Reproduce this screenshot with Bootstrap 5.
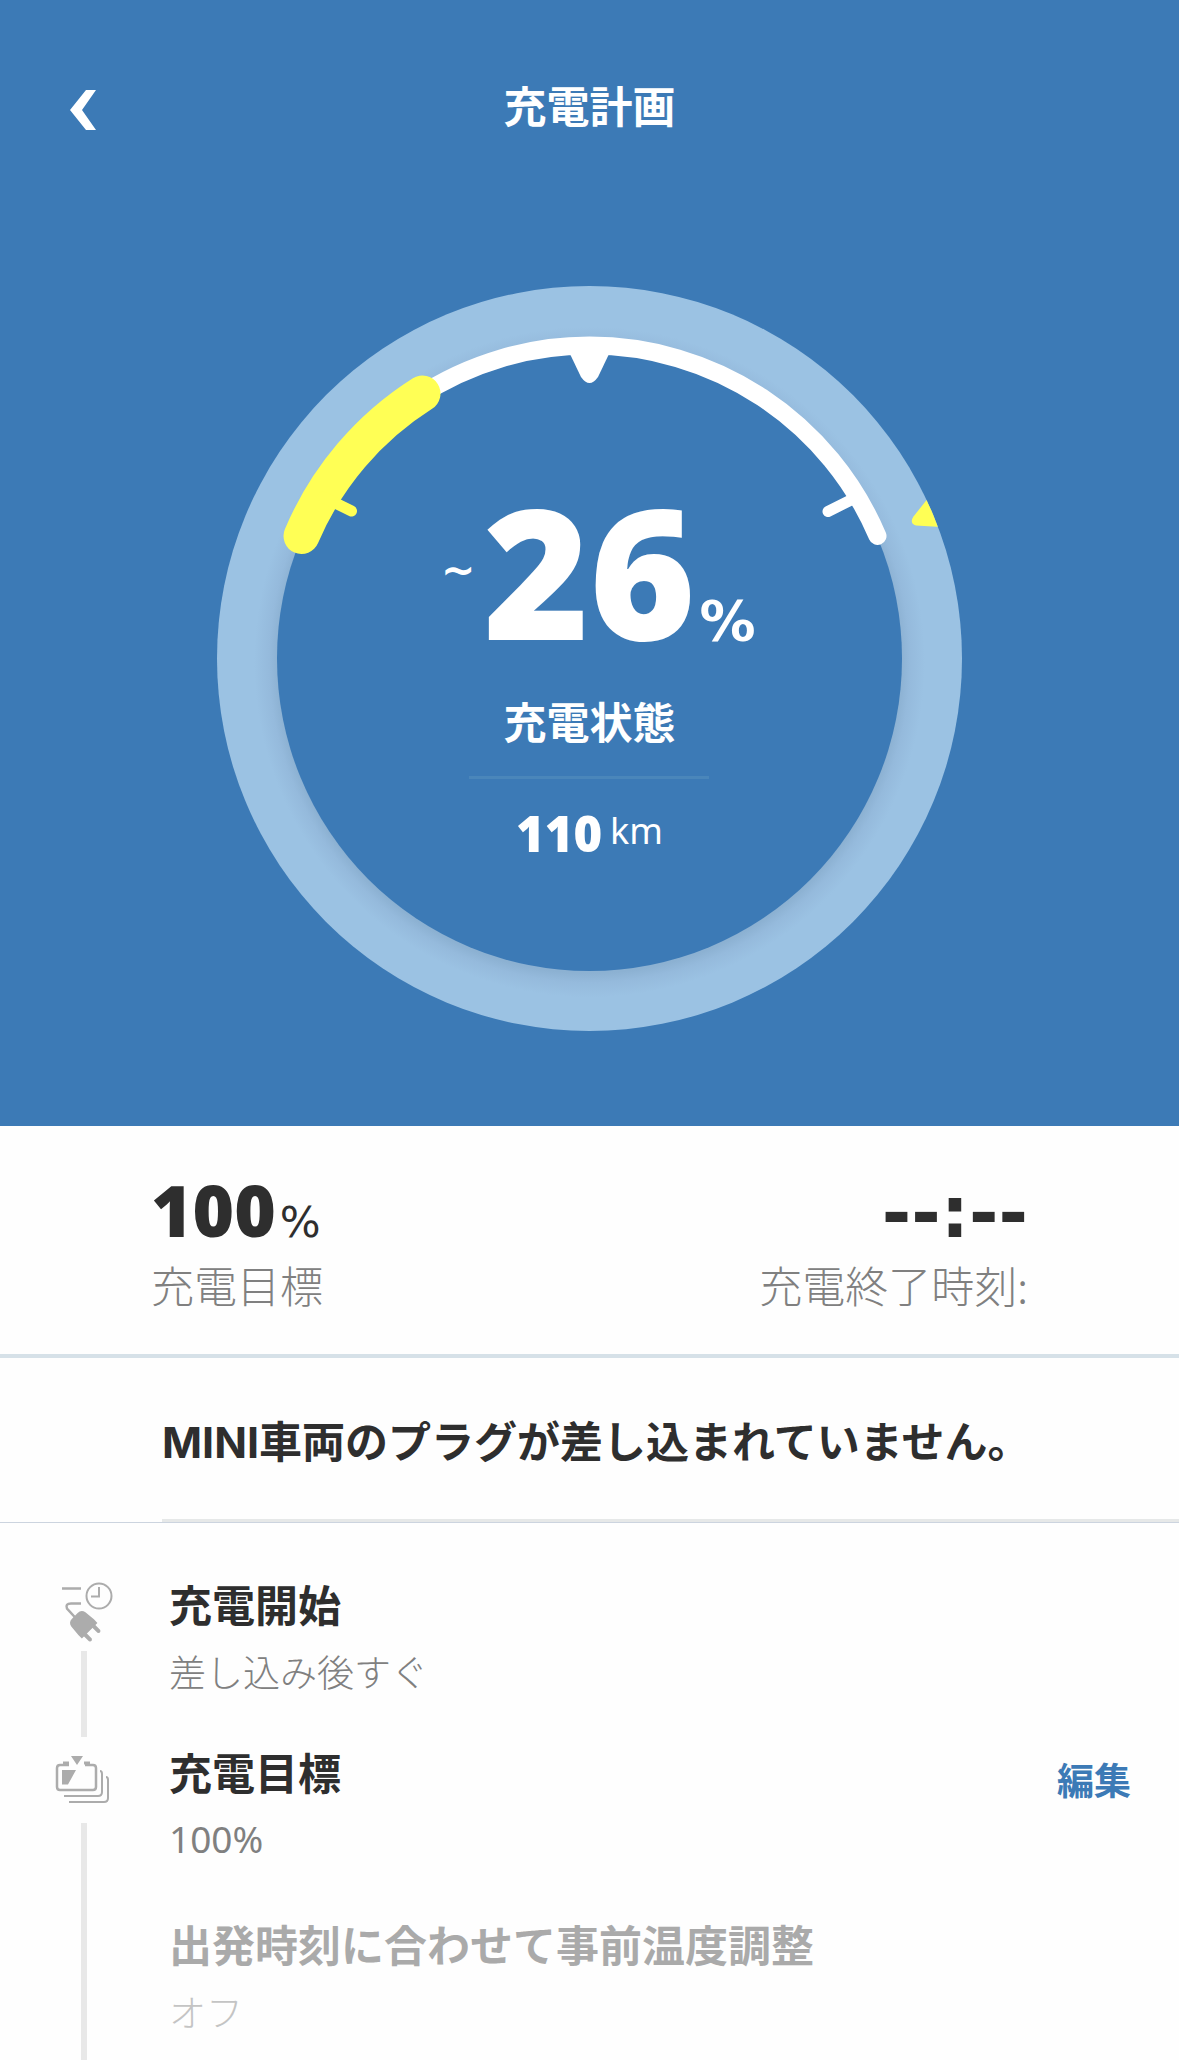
<!DOCTYPE html>
<html lang="ja">
<head>
<meta charset="utf-8">
<meta name="viewport" content="width=device-width, initial-scale=1">
<title>充電計画</title>
<link href="https://cdn.jsdelivr.net/npm/bootstrap@5.3.0/dist/css/bootstrap.min.css" rel="stylesheet">
<style>
  :root { --mini-blue: #3c7ab6; --ink: #2e2e2e; --muted: #808080; --idle: #aaaaaa; }
  body { font-family: "Noto Sans", "Noto Sans CJK JP", sans-serif; color: var(--ink); background: #fefefe; overflow-x: hidden; }
  .cjk { font-family: "Noto Sans CJK JP", "Noto Sans", sans-serif; }
  .numerals { font-family: "Open Sans", "Noto Sans", sans-serif; font-weight: 800; }
  .wide-sign { font-family: "DejaVu Sans", sans-serif; }
  .hero { background: var(--mini-blue); padding-bottom: 95px; }
  .topbar { display: grid; grid-template-columns: 1fr auto 1fr; padding: 72px 56px 0; }
  .back-btn { padding: 17px 13px 5px; border: 0; line-height: 1; justify-self: start; }
  .back-btn svg { display: block; }
  .heading { font-size: 43px; line-height: 64px; font-weight: 700; }
  .gauge { display: grid; justify-items: center; width: 745px; max-width: 100%; margin: 150px auto 0; }
  .gauge > * { grid-area: 1 / 1; }
  .gauge-svg { width: 100%; height: auto; }
  .readout { padding-top: 184px; }
  .level-row { display: grid; grid-template-columns: 1fr auto 1fr; align-items: baseline; margin-bottom: 18px; }
  .level { font-size: 181px; line-height: 200px; }
  .level-unit { font-size: 56px; line-height: 60px; font-weight: 700; }
  .approx { font-size: 41px; font-weight: 700; line-height: 200px; align-self: start; justify-self: end; }
  .rule { width: 240px; height: 3px; background: #4a86ba; margin: 24px 0 22px; }
  .range-num { font-size: 49px; line-height: 64px; }
  .range-unit { font-size: 36px; line-height: 60px; }
  .summary { padding: 42px 151px 36px; border-bottom: 4px solid #d6e1e8; }
  .summary-value { height: 80px; line-height: 84px; }
  .summary-num { font-size: 71px; }
  .summary-time { line-height: 90px; }
  .summary-unit { font-size: 43px; }
  .summary-label { font-size: 43px; line-height: 68px; margin-top: 2px; font-weight: 300; color: var(--muted); }
  .notice { padding: 52px 0 0 162px; border-bottom: 1px solid #ccd4df; }
  .notice .heading { font-family: Inter, "Noto Sans CJK JP", sans-serif; }
  .notice-line { height: 3px; background: #e6e8e8; margin-top: 45px; }
  .timeline { padding: 50px 48px 0 54px; }
  .step-item { display: flex; }
  .step-rail { width: 60px; margin-right: 55px; display: flex; flex-direction: column; align-items: center; flex: none; }
  .step-icon { height: 75px; margin-top: 3px; flex: none; }
  .rail-bar { width: 6px; background: #e8e8e8; flex-grow: 1; }
  .step-body { padding-bottom: 48px; }
  .step-title { font-size: 43px; line-height: 60px; font-weight: 700; }
  .step-note { font-size: 37px; line-height: 44px; margin-top: 16px; font-weight: 300; color: var(--muted); }
  .inactive .step-title { color: var(--idle); }
  .inactive .step-note { color: #c4c4c4; }
  .edit-link { font-size: 37px; line-height: 76px; font-weight: 700; color: var(--mini-blue); }
</style>
<script src="https://cdn.jsdelivr.net/npm/bootstrap@5.3.0/dist/js/bootstrap.bundle.min.js"></script>
</head>
<body>
<div class="d-flex flex-column min-vh-100">
  <header class="hero text-white">
    <div class="topbar">
      <button type="button" class="btn back-btn" aria-label="戻る">
        <svg width="28" height="40" viewBox="0 0 28 40" fill="#fff"><path d="M17 0h10L13 20l14 20H17L1 20z"/></svg>
      </button>
      <h1 class="heading cjk m-0">充電計画</h1>
    </div>
    <section class="gauge" aria-label="充電状態">
      <svg class="gauge-svg" viewBox="0 0 745 745" aria-hidden="true">
        <defs>
          <radialGradient id="ringShade" gradientUnits="userSpaceOnUse" cx="372.5" cy="376" r="372.5">
            <stop offset=".835" stop-color="#8cb1d2"/>
            <stop offset=".86" stop-color="#95badc"/>
            <stop offset=".9" stop-color="#9bc2e3"/>
          </radialGradient>
          <clipPath id="ringClip"><circle cx="372.5" cy="372.5" r="372.5"/></clipPath>
        </defs>
        <circle cx="372.5" cy="372.5" r="372.5" fill="url(#ringShade)"/>
        <circle cx="372.5" cy="372.5" r="312.5" fill="#3c7ab6"/>
        <g clip-path="url(#ringClip)"><path d="M696.500 230.500L712 211L740 190V242L699 239.500Q692 237 696.500 230.500z" fill="#ffff55"/></g>
        <g fill="none" stroke="#fff" stroke-linecap="round">
          <path d="M84.500 250A313 313 0 0 1 660.500 250" stroke-width="18"/>
          <path d="M640 211L611 225.500" stroke-width="11"/>
        </g>
        <path d="M353 68H392L381 91Q372.500 103 364 91z" fill="#fff"/>
        <g fill="none" stroke="#ffff55" stroke-linecap="round">
          <path d="M84.500 250A313 313 0 0 1 205.500 107.500" stroke-width="36"/>
          <path d="M106 211L134.500 225" stroke-width="11"/>
        </g>
      </svg>
      <div class="readout d-flex flex-column align-items-center">
        <div class="level-row">
          <span class="approx wide-sign me-2">~</span>
          <span class="level numerals">26</span>
          <span class="level-unit wide-sign ms-1">%</span>
        </div>
        <h2 class="heading cjk m-0">充電状態</h2>
        <div class="rule"></div>
        <div class="d-flex"><span class="range-num numerals">110</span><span class="range-unit ms-2">km</span></div>
      </div>
    </section>
  </header>
  <section class="summary d-flex justify-content-between">
    <div>
      <div class="summary-value"><span class="summary-num numerals">100</span><span class="summary-unit wide-sign ms-1">%</span></div>
      <div class="summary-label cjk">充電目標</div>
    </div>
    <div class="text-end">
      <div class="summary-value summary-time summary-num wide-sign fw-bold">--:--</div>
      <div class="summary-label cjk">充電終了時刻:</div>
    </div>
  </section>
  <section class="notice">
    <h2 class="heading m-0">MINI車両のプラグが差し込まれていません。</h2>
    <div class="notice-line"></div>
  </section>
  <main class="timeline d-flex flex-column flex-grow-1">
    <div class="step-item">
      <div class="step-rail">
        <svg class="step-icon" width="60" height="75" viewBox="0 0 60 75" fill="none" stroke="#acacac" stroke-width="2">
          <circle cx="45" cy="20" r="12.500"/><path d="M45 11v9.500h-8"/><path d="M8 12.500h19M27 27.500H17q-6 0-4 5l10 11" stroke-width="2.500"/>
          <g transform="translate(30 49) rotate(-45)" fill="#acacac" stroke="none">
            <path d="M-10-8Q-9-13-4-13H4Q9-13 10-8L11 3V8H-11V3z"/><path d="M-8 6h4v9q-2 3-4 0zM4 6h4v9q-2 3-4 0z"/>
          </g>
        </svg>
        <div class="rail-bar mb-1"></div>
      </div>
      <div class="step-body"><h3 class="step-title cjk m-0">充電開始</h3><div class="step-note cjk">差し込み後すぐ</div></div>
    </div>
    <div class="step-item">
      <div class="step-rail">
        <svg class="step-icon" width="60" height="75" viewBox="0 1 60 75" fill="none" stroke="#acacac" stroke-width="2.500">
          <path d="M15 22H6q-3 0-3 3V44q0 3 3 3H39q3 0 3-3V25q0-3-3-3H31"/>
          <path d="M9 20h6M30 20h6" stroke-width="3"/>
          <path d="M17 13H29L23 22zM8 27H22L14 41.500H8z" fill="#acacac" stroke="none"/>
          <path d="M46 28Q48 28 48 31V49q0 4-4 4H10M52 34Q54 34 54 37V55q0 4-4 4H15" stroke-width="2"/>
        </svg>
        <div class="rail-bar mt-1"></div>
      </div>
      <div class="step-body flex-grow-1"><h3 class="step-title cjk m-0">充電目標</h3><div class="step-note fw-normal">100%</div></div>
      <div><a href="#" class="edit-link cjk text-decoration-none">編集</a></div>
    </div>
    <div class="step-item inactive flex-grow-1">
      <div class="step-rail"><div class="rail-bar"></div></div>
      <div class="step-body pt-1 pb-0"><h3 class="step-title cjk m-0">出発時刻に合わせて事前温度調整</h3><div class="step-note cjk">オフ</div></div>
    </div>
  </main>
</div>
</body>
</html>
